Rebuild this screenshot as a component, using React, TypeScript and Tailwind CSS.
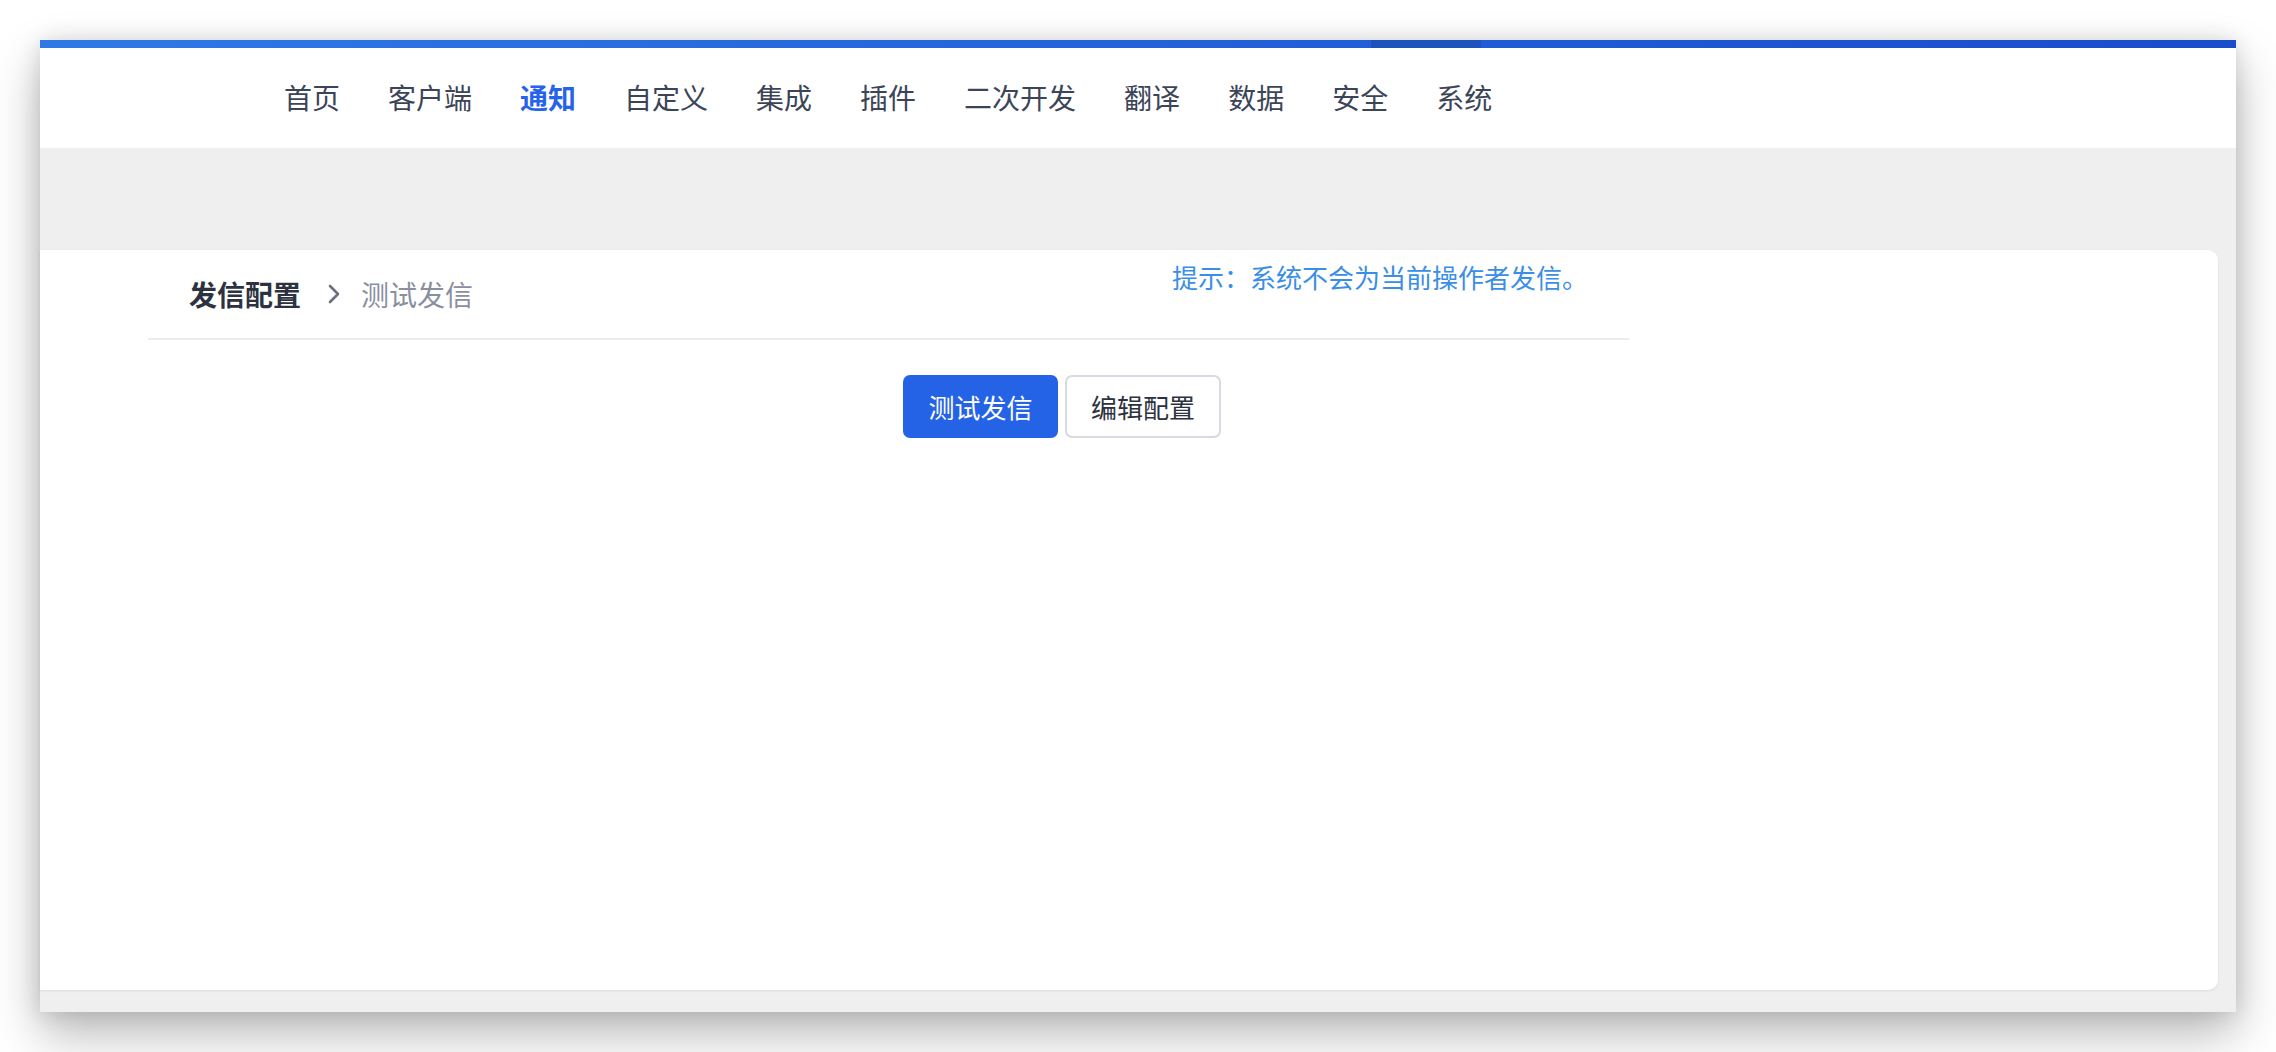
import React from "react";

const navItems = ["首页", "客户端", "通知", "自定义", "集成", "插件", "二次开发", "翻译", "数据", "安全", "系统"];

const font = { fontFamily: '"Noto Sans CJK SC", "Noto Sans", sans-serif' };

export default function App() {
  return (
    <div className="w-[2276px] h-[1052px] bg-white pt-[40px] pl-[40px] overflow-hidden" style={font}>
      <div className="w-[2196px] h-[972px] bg-[#efefef] flex flex-col shadow-[0_22px_45px_rgba(0,0,0,0.28),0_0_20px_rgba(0,0,0,0.12)]">
        {/* barre de progression */}
        <div className="relative h-[8px] bg-gradient-to-r from-[#2f79e6] via-[#2462da] to-[#194ccb]">
          <div className="absolute top-0 left-[1331px] h-[8px] w-[110px] bg-[#1e52bd]" />
        </div>

        <nav className="h-[100px] bg-white flex items-center pl-[244px] gap-[48px] pb-[2px]">
          {navItems.map((item) => (
            <span
              key={item}
              className={
                item === "通知"
                  ? "text-[28px] font-bold text-[#2563eb] leading-none"
                  : "text-[28px] text-[#3c4458] leading-none"
              }
            >
              {item}
            </span>
          ))}
        </nav>

        <div className="h-[102px]" />

        <div className="flex-1 mr-[18px] mb-[22px] bg-white rounded-r-[10px] shadow-[0_1px_3px_rgba(0,0,0,0.08)] flex flex-col">
          <div className="relative ml-[108px] w-[1481px] h-[90px] border-b-2 border-[#ececec] flex items-center pl-[41px]">
            <span className="text-[28px] font-bold text-[#2d3240] leading-none">发信配置</span>
            <svg className="ml-[24px] mr-[18px]" width="18" height="24" viewBox="0 0 18 24" fill="none">
              <path d="M5 4l8 8-8 8" stroke="#6b7080" strokeWidth="2.6" strokeLinecap="round" strokeLinejoin="round" />
            </svg>
            <span className="text-[28px] text-[#8a8fa0] leading-none">测试发信</span>
            <span className="absolute top-[11px] right-[41px] text-[26px] text-[#3a8ee6] leading-[32px]">
              提示：系统不会为当前操作者发信。
            </span>
          </div>

          <div className="flex ml-[863px] mt-[35px] gap-[7px]">
            <button className="w-[155px] h-[63px] rounded-[7px] bg-[#2563e6] text-white text-[26px]">
              测试发信
            </button>
            <button className="w-[156px] h-[63px] rounded-[7px] bg-white border-2 border-[#d8dae3] text-[#2d3240] text-[26px]">
              编辑配置
            </button>
          </div>
        </div>
      </div>
    </div>
  );
}
